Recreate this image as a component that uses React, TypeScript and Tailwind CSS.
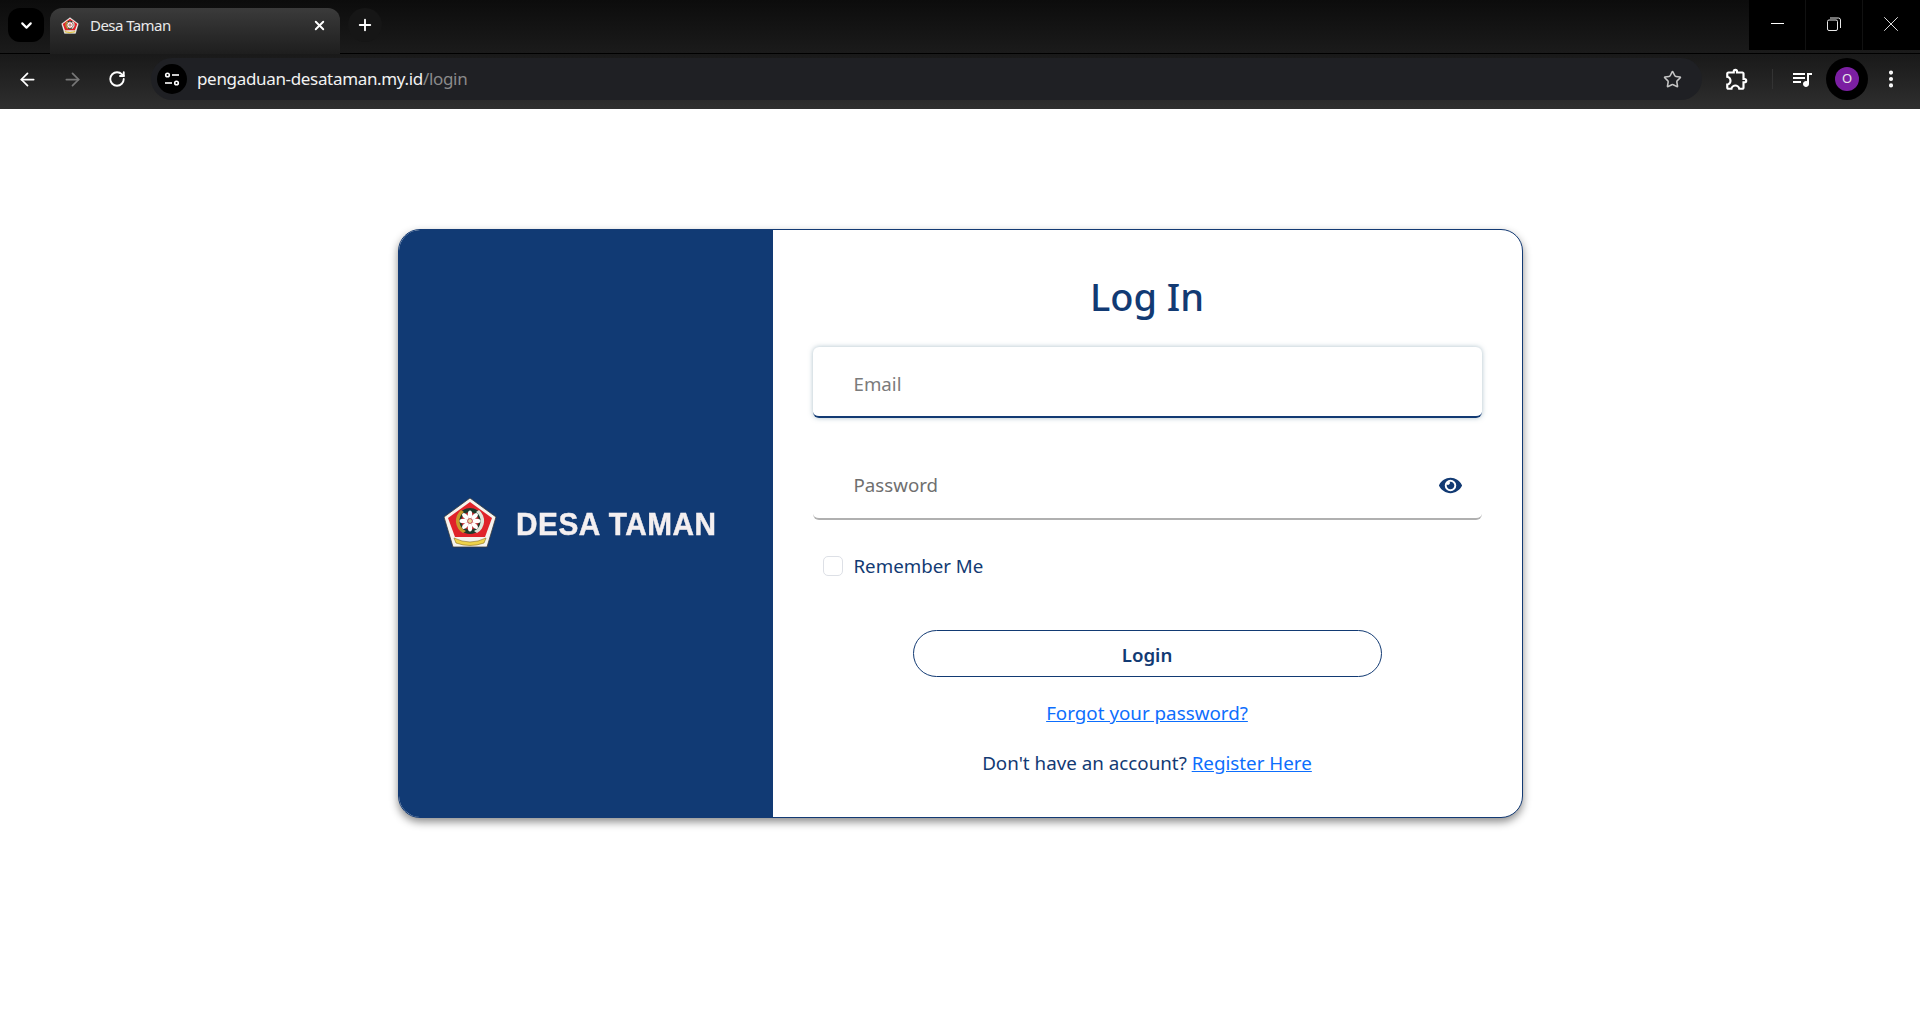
import React from 'react';
import { ArrowLeft, ArrowRight, ChevronDown, EllipsisVertical, Plus, RotateCw, Star, X } from 'lucide-react';
import { FaEye } from 'react-icons/fa';
import { MdOutlineExtension, MdOutlineQueueMusic } from 'react-icons/md';

const Emblem = ({ size }: { size: number }) => (
  <svg width={size} height={size} viewBox="0 0 54 54">
    <path d="M27 1 L53 20 L44 50 L10 50 L1 20 Z" fill="#f6f3ee" stroke="#3a3a3a" strokeWidth="0.8" />
    <path d="M27 5 L49 21 L42 40 L12 40 L5 21 Z" fill="#e0232a" />
    <circle cx="27" cy="24" r="13" fill="#1c3b2c" />
    <path d="M18 13 A14 14 0 0 0 20 36 L23 34 A11 11 0 0 1 21 15 Z" fill="#c89a2a" />
    <path d="M36 13 A14 14 0 0 1 34 36 L31 34 A11 11 0 0 0 33 15 Z" fill="#dfe6dc" />
    <circle cx="27" cy="24" r="9" fill="#b5252a" />
    <g fill="#ffffff">
      <ellipse cx="27" cy="17.5" rx="2.2" ry="4" />
      <ellipse cx="27" cy="30.5" rx="2.2" ry="4" />
      <ellipse cx="20.5" cy="24" rx="4" ry="2.2" />
      <ellipse cx="33.5" cy="24" rx="4" ry="2.2" />
      <ellipse cx="22.4" cy="19.4" rx="2.2" ry="4" transform="rotate(-45 22.4 19.4)" />
      <ellipse cx="31.6" cy="19.4" rx="2.2" ry="4" transform="rotate(45 31.6 19.4)" />
      <ellipse cx="22.4" cy="28.6" rx="2.2" ry="4" transform="rotate(45 22.4 28.6)" />
      <ellipse cx="31.6" cy="28.6" rx="2.2" ry="4" transform="rotate(-45 31.6 28.6)" />
    </g>
    <circle cx="27" cy="24" r="2" fill="#e8d9a0" />
    <path d="M11 41 Q27 49 43 41 L41 46 Q27 51 13 46 Z" fill="#efd34a" stroke="#8a6d1a" strokeWidth="0.6" />
  </svg>
);

const BrowserChrome = () => (
  <div className="shrink-0 text-white font-['Noto_Sans',sans-serif]">
    {/* Tab strip */}
    <div className="h-[54px] flex bg-gradient-to-b from-[#0c0c0c] to-[#1b1b1b] border-b border-black">
      <div className="w-[36px] h-[34px] mt-2 ml-2 bg-black rounded-xl flex items-center justify-center">
        <ChevronDown className="w-[17px] h-[17px]" strokeWidth={3} />
      </div>
      <div className="w-[290px] h-[46px] mt-2 ml-[6px] rounded-t-xl bg-gradient-to-b from-[#3b3b3b] to-[#1e1e1e] flex items-center pl-[11px] pr-[13px] pb-[11px]">
        <Emblem size={18} />
        <span className="ml-[11px] flex-1 text-[15px] tracking-[-0.55px] text-[#e8e8e8]">Desa Taman</span>
        <X className="w-[15px] h-[15px]" strokeWidth={3} />
      </div>
      <div className="w-[34px] h-[34px] mt-2 ml-2 rounded-full bg-[#161616] flex items-center justify-center">
        <Plus className="w-[18px] h-[18px]" strokeWidth={2.5} />
      </div>
      <div className="ml-auto h-[50px] flex bg-black">
        <div className="w-[56px] flex items-center justify-center pb-[3px]">
          <div className="w-[13px] h-px bg-white" />
        </div>
        <div className="w-[58px] flex items-center justify-center border-x border-[#111] pb-[2px]">
          <svg width="14" height="14" viewBox="0 0 14 14" fill="none" stroke="#e8e8e8" strokeWidth="1">
            <rect x="0.5" y="3" width="10" height="10.5" rx="1.5" />
            <path d="M3 1 H11.5 Q13.5 1 13.5 3 V11" />
          </svg>
        </div>
        <div className="w-[57px] flex items-center justify-center pb-[2px] pr-[2px]">
          <X className="w-[26px] h-[26px]" strokeWidth={0.8} />
        </div>
      </div>
    </div>

    {/* Toolbar */}
    <div className="h-[55px] flex items-center pb-[5px] bg-gradient-to-b from-[#191919] to-[#2f2f2f]">
      <ArrowLeft className="ml-[17px] w-[21px] h-[21px]" strokeWidth={2} />
      <ArrowRight className="ml-[24px] w-[21px] h-[21px] text-[#777777]" strokeWidth={2} />
      <RotateCw className="ml-[25px] w-[18px] h-[18px]" strokeWidth={2.5} />
      <div className="ml-[25px] w-[1551px] h-[42px] rounded-full bg-[#1f2024] flex items-center pl-[6px] pr-[20px]">
        <div className="w-[30px] h-[30px] rounded-full bg-black flex items-center justify-center">
          <svg width="16" height="14" viewBox="0 0 16 14" fill="none" stroke="#ffffff" strokeWidth="1.6">
            <circle cx="3.5" cy="3" r="1.8" />
            <path d="M8 3 H15" />
            <path d="M1 11 H8" />
            <circle cx="12.5" cy="11" r="1.8" />
          </svg>
        </div>
        <span className="ml-[10px] text-[17px] tracking-[-0.33px] text-[#f2f2f2]">
          pengaduan-desataman.my.id<span className="text-[#8a8a8a]">/login</span>
        </span>
        <Star className="ml-auto w-[19px] h-[19px] text-[#c4c4c4]" strokeWidth={2} />
      </div>
      <MdOutlineExtension className="ml-[22px] w-[26px] h-[26px]" />
      <div className="ml-[22px] w-px h-5 bg-[#333333]" />
      <MdOutlineQueueMusic className="ml-[17px] w-[24px] h-[24px]" />
      <div className="ml-[12px] w-[42px] h-[42px] rounded-full bg-black flex items-center justify-center">
        <div className="w-[24px] h-[24px] rounded-full bg-[#7b1fa2] flex items-center justify-center text-[13px] text-[#e8e8e8]">O</div>
      </div>
      <EllipsisVertical className="ml-[12px] w-[22px] h-[22px]" strokeWidth={2.5} />
    </div>
  </div>
);

const App = () => {
  return (
    <div className="h-screen overflow-hidden flex flex-col bg-white">
      <BrowserChrome />

      <div className="flex-1 pt-[120px]">
        <div className="mx-auto w-[1125px] h-[589px] flex rounded-[22px] overflow-hidden bg-white border border-[#133a74] shadow-[0_4px_8px_rgba(0,0,0,0.45)] font-['Noto_Sans',sans-serif]">
          {/* Brand side */}
          <div className="w-[374px] shrink-0 bg-[#113a74] flex items-center pl-[44px]">
            <Emblem size={54} />
            <span className="ml-[19px] origin-left scale-x-[0.93] blur-[0.3px] [-webkit-text-stroke:0.5px_#f4eff0] font-['Liberation_Sans',sans-serif] font-bold text-[32px] leading-none tracking-[0.6px] text-[#f4eff0]">
              DESA TAMAN
            </span>
          </div>

          {/* Form side */}
          <div className="flex-1 pl-[40px] pr-[40px] pt-[42px] flex flex-col text-[#123a73]">
            <h1 className="text-center text-[38px] leading-[48px] font-medium">Log In</h1>

            <div className="mt-[27px] h-[71px] rounded-md border-b-2 border-[#123a73] shadow-[0_0_5px_rgba(90,130,150,0.5)] flex items-center pl-[41px] pt-[5px]">
              <input
                placeholder="Email"
                className="w-full outline-none text-[18.7px] placeholder:text-[#7b7b7b]"
              />
            </div>

            <div className="mt-[30px] h-[72px] rounded-md border-b-2 border-[#b0b0b0] flex items-center pl-[41px] pr-[20px] pt-[5px]">
              <input
                placeholder="Password"
                className="w-full outline-none text-[18.7px] placeholder:text-[#6f6f6f]"
              />
              <FaEye className="shrink-0 w-[23px] h-[23px]" />
            </div>

            <label className="mt-[33px] flex items-center pl-[10px]">
              <span className="w-[20px] h-[20px] rounded-[5px] border border-[#dde0e6] bg-white" />
              <span className="ml-[11px] text-[18.7px] leading-[26px]">Remember Me</span>
            </label>

            <button className="mt-[51px] mx-auto w-[469px] h-[47px] pt-[3px] rounded-full border border-[#123a73] text-[18.7px] font-semibold">
              Login
            </button>

            <a href="#" className="mt-[23px] text-center text-[18.8px] leading-[26px] text-[#0d6efd] underline">
              Forgot your password?
            </a>

            <p className="mt-[24px] text-center text-[18.8px] leading-[26px]">
              Don't have an account?{' '}
              <a href="#" className="text-[#0d6efd] underline">Register Here</a>
            </p>
          </div>
        </div>
      </div>
    </div>
  );
};

export default App;
